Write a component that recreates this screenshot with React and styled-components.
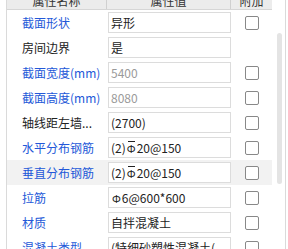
import styled, { createGlobalStyle } from 'styled-components';

const Global = createGlobalStyle`
html, body {
  margin: 0;
  padding: 0;
  background: #fff;
  overflow: hidden;
}
body {
  font-family: "Microsoft YaHei", "Noto Sans CJK SC", "Noto Sans", sans-serif;
  font-size: 12px;
}
`;

const Page = styled.div`
  width: 288px;
  height: 249px;
  overflow: hidden;
  padding-left: 6px;
  box-sizing: border-box;
`;

const Panel = styled.div`
  display: flex;
  width: 280px;
  height: 249px;
  border-left: 1px solid #dadada;
  border-right: 1px solid #dadada;
  box-sizing: border-box;
  overflow: hidden;
`;

const Table = styled.div`
  width: 265px;
  flex-shrink: 0;
`;

const Header = styled.div`
  display: grid;
  grid-template-columns: 100px 124px 41px;
  height: 9px;
  background: #ececec;
  border-bottom: 1px solid #d6d6d6;
  overflow: hidden;
`;

const HeadCell = styled.div`
  height: 9px;
  border-right: ${p => (p.last ? 'none' : '1px solid #d0d0d0')};
  color: #333;
  font-size: 12px;
  line-height: 12px;
  text-align: center;
  white-space: nowrap;
  & > span {
    display: inline-block;
    transform: translateY(-5px);
  }
`;

const Row = styled.div`
  display: grid;
  grid-template-columns: 100px 124px 41px;
  height: 25px;
  align-items: center;
  background: ${p => (p.hover ? '#f2f2f2' : 'transparent')};
`;

const Label = styled.div`
  padding-left: 15px;
  color: ${p => (p.blue ? '#2358d8' : '#222')};
  white-space: nowrap;
  overflow: hidden;
  line-height: 25px;
`;

const Value = styled.div`
  box-sizing: border-box;
  margin-left: 1px;
  height: 21px;
  border: 1px solid #dcdcdc;
  background: #fff;
  padding-left: 2px;
  color: ${p => (p.muted ? '#9a9a9a' : '#222')};
  line-height: 19px;
  white-space: nowrap;
  overflow: hidden;
`;

const CheckCell = styled.div`
  display: flex;
  justify-content: center;
`;

const Box = styled.div`
  width: 14px;
  height: 14px;
  box-sizing: border-box;
  border: 1px solid #888;
  border-radius: 2px;
  background: #fff;
  margin-left: 1px;
`;

const Mark = styled.span`
  position: relative;
  display: inline-block;
  font-size: 11px;
  margin: 0 1px;
  &::before {
    content: '';
    display: ${p => (p.three ? 'block' : 'none')};
    position: absolute;
    left: 1px;
    right: 1px;
    top: 2px;
    height: 1px;
    background: currentColor;
  }
`;

const Track = styled.div`
  width: 13px;
  flex-shrink: 0;
  padding-top: 33px;
  box-sizing: border-box;
`;

const Thumb = styled.div`
  width: 5px;
  height: 151px;
  margin-left: 5px;
  border-radius: 3px;
  background: #e4e4e4;
`;

const rows = [
  { label: '截面形状', blue: true, value: '异形', check: true },
  { label: '房间边界', value: '是', check: false },
  { label: '截面宽度(mm)', blue: true, value: '5400', muted: true, check: true },
  { label: '截面高度(mm)', blue: true, value: '8080', muted: true, check: true },
  { label: '轴线距左墙...', value: '(2700)', check: true },
  { label: '水平分布钢筋', blue: true, value: <>(2)<Mark three>Φ</Mark>20@150</>, check: true },
  { label: '垂直分布钢筋', blue: true, value: <>(2)<Mark three>Φ</Mark>20@150</>, check: true, hover: true },
  { label: '拉筋', blue: true, value: <><Mark>Φ</Mark>6@600*600</>, check: true },
  { label: '材质', blue: true, value: '自拌混凝土', check: true },
  { label: '混凝土类型', blue: true, value: '(特细砂塑性混凝土(', check: true },
];

export default function App() {
  return (
    <Page>
      <Global />
      <Panel>
        <Table>
          <Header>
            <HeadCell><span>属性名称</span></HeadCell>
            <HeadCell><span>属性值</span></HeadCell>
            <HeadCell last><span>附加</span></HeadCell>
          </Header>
          {rows.map((r, i) => (
            <Row key={i} hover={r.hover}>
              <Label blue={r.blue}>{r.label}</Label>
              <Value muted={r.muted}>{r.value}</Value>
              <CheckCell>{r.check && <Box />}</CheckCell>
            </Row>
          ))}
        </Table>
        <Track>
          <Thumb />
        </Track>
      </Panel>
    </Page>
  );
}
